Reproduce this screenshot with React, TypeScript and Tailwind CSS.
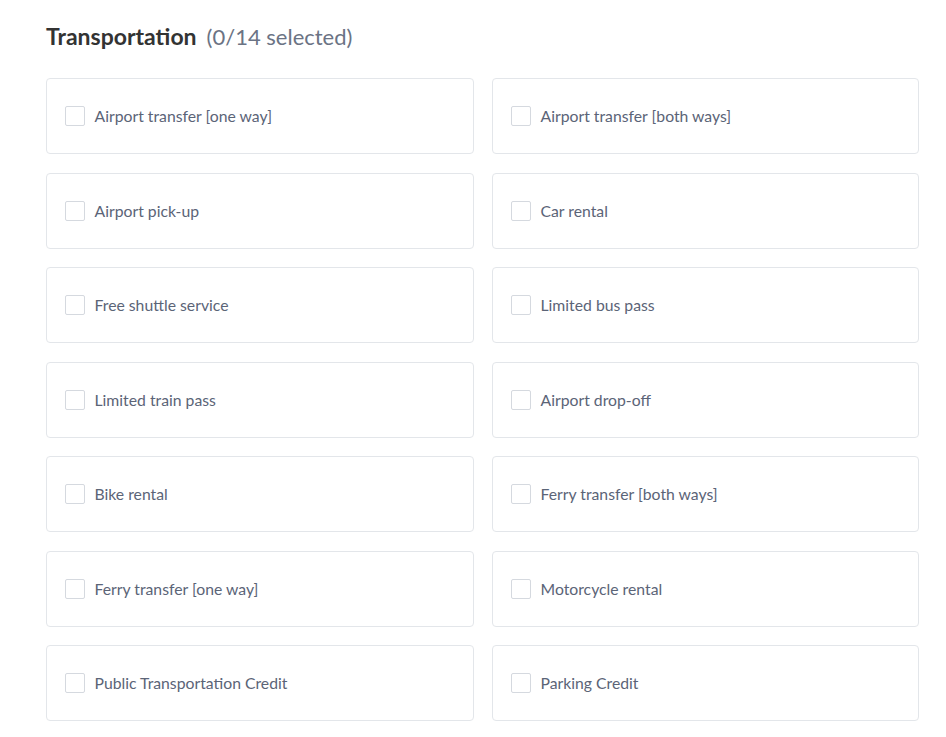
import React from "react";

const items = [
  "Airport transfer [one way]",
  "Airport transfer [both ways]",
  "Airport pick-up",
  "Car rental",
  "Free shuttle service",
  "Limited bus pass",
  "Limited train pass",
  "Airport drop-off",
  "Bike rental",
  "Ferry transfer [both ways]",
  "Ferry transfer [one way]",
  "Motorcycle rental",
  "Public Transportation Credit",
  "Parking Credit",
];

export default function App() {
  return (
    <div
      className="min-h-[737px] w-full bg-white pl-[46px] pt-[21px]"
      style={{ fontFamily: "Lato, 'Open Sans', sans-serif" }}
    >
      <h2 className="flex items-baseline gap-[10px] leading-[30px]">
        <span className="text-[23px] font-bold text-[#333333]">Transportation</span>
        <span className="text-[22px] font-normal text-[#6b7384]">(0/14 selected)</span>
      </h2>
      <div className="mt-[26px] grid grid-cols-[428px_427px] gap-x-[18px] gap-y-[18.5px]">
        {items.map((label) => (
          <label
            key={label}
            className="flex h-[76px] items-center rounded-[4px] border border-[#e3e6ea] bg-white pl-[18px]"
          >
            <span className="h-[20px] w-[20px] shrink-0 rounded-[2px] border border-[#d5d9df] bg-white" />
            <span className="ml-[9.5px] text-[15.75px] text-[#5b6477]">{label}</span>
          </label>
        ))}
      </div>
    </div>
  );
}
